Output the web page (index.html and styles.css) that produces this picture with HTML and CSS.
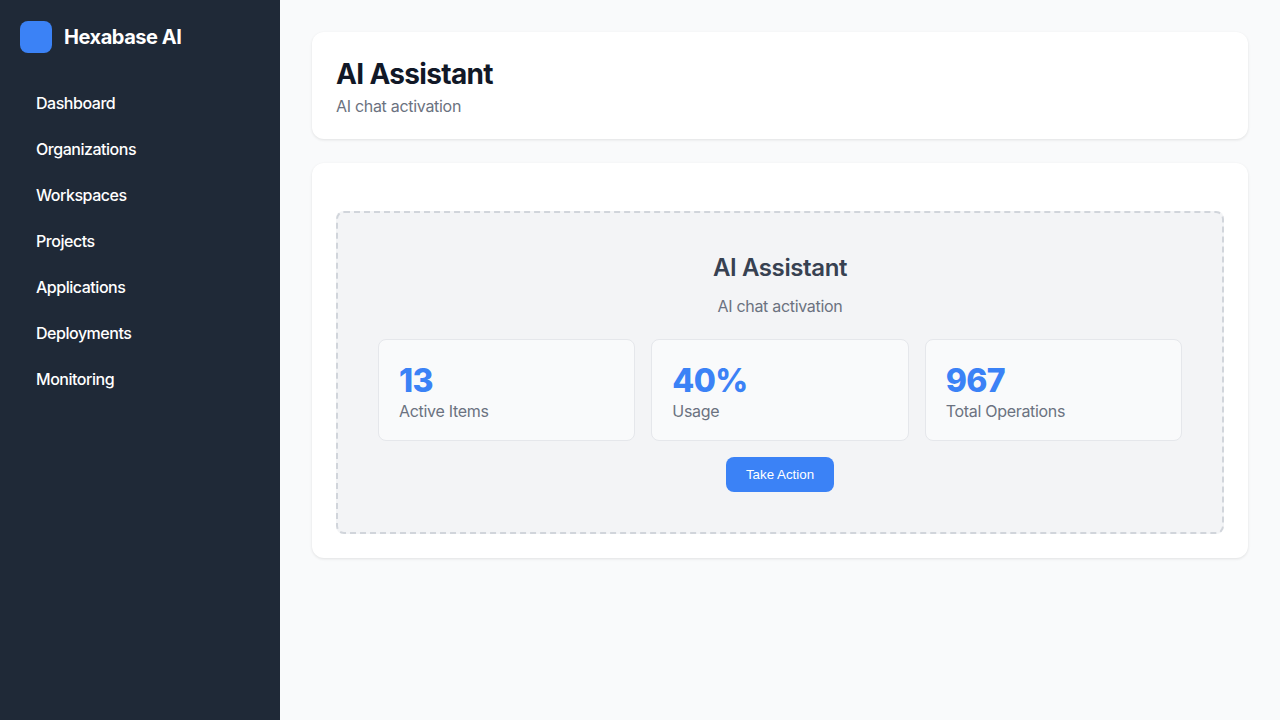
FILE: index.html
```html
<!DOCTYPE html>
<html lang="en">
<head>
<meta charset="utf-8">
<title>AI Assistant</title>
<link rel="stylesheet" href="styles.css">
</head>
<body>
<div class="layout">
  <aside class="sidebar">
    <div class="brand"><span class="logo"></span><span class="brand-name">Hexabase AI</span></div>
    <nav class="nav">
      <a class="nav-item">Dashboard</a>
      <a class="nav-item">Organizations</a>
      <a class="nav-item">Workspaces</a>
      <a class="nav-item">Projects</a>
      <a class="nav-item">Applications</a>
      <a class="nav-item">Deployments</a>
      <a class="nav-item">Monitoring</a>
    </nav>
  </aside>
  <main class="main">
    <header class="card header">
      <h1>AI Assistant</h1>
      <p>AI chat activation</p>
    </header>
    <section class="card content">
      <div class="panel">
        <h2>AI Assistant</h2>
        <p class="sub">AI chat activation</p>
        <div class="stats">
          <div class="stat"><div class="num">13</div><div class="label">Active Items</div></div>
          <div class="stat"><div class="num">40%</div><div class="label">Usage</div></div>
          <div class="stat"><div class="num">967</div><div class="label">Total Operations</div></div>
        </div>
        <button class="btn">Take Action</button>
      </div>
    </section>
  </main>
</div>
</body>
</html>
```
FILE: styles.css
```css
* { box-sizing: border-box; }
html, body { margin: 0; height: 100%; }
body { font-family: Inter, "Liberation Sans", sans-serif; background: #f9fafb; }
.layout { display: flex; min-height: 720px; }
.sidebar { width: 280px; flex: none; background: #1f2937; color: #fff; padding: 20px 0; }
.brand { display: flex; align-items: center; gap: 12px; padding: 0 20px; margin-bottom: 32px; }
.logo { width: 32px; height: 32px; border-radius: 8px; background: #3b82f6; }
.brand-name { font-size: 20px; font-weight: 700; line-height: 34px; letter-spacing: -0.45px; }
.nav { display: flex; flex-direction: column; gap: 4px; padding: 0 20px; margin-top: -4px; }
.nav-item { display: block; padding: 12px 16px; font-size: 16px; line-height: 18px; font-weight: 450; letter-spacing: -0.47px; border-radius: 8px; color: #fff; }
.main { flex: 1; padding: 32px; display: flex; flex-direction: column; gap: 24px; }
.card { background: #fff; border-radius: 12px; box-shadow: 0 1px 3px rgba(0,0,0,.1); padding: 24px; }
.header { padding: 24px 24px 23px; }
.header h1 { margin: 1px 0 0; font-size: 28px; line-height: 34px; font-weight: 700; letter-spacing: -0.67px; color: #111827; }
.header p { margin: 6px 0 0; font-size: 16px; line-height: 19px; letter-spacing: -0.3px; color: #6b7280; }
.content { padding: 48px 24px 24px; }
.panel { background: #f3f4f6; border: 2px dashed #d1d5db; border-radius: 8px; padding: 40px; text-align: center; height: 323px; }
.panel h2 { margin: 0; font-size: 24px; line-height: 29px; font-weight: 600; letter-spacing: -0.4px; color: #374151; }
.sub { margin: 15px 0 0; font-size: 16px; line-height: 19px; letter-spacing: -0.3px; color: #6b7280; }
.stats { display: grid; grid-template-columns: repeat(3, 1fr); gap: 16px; margin-top: 23px; }
.stat { background: #f9fafb; border: 1px solid #e5e7eb; border-radius: 8px; padding: 20px 20px 19px; text-align: left; }
.num { font-size: 32px; line-height: 42px; font-weight: 800; letter-spacing: -0.6px; color: #3b82f6; }
.label { font-size: 16px; line-height: 19px; letter-spacing: -0.3px; color: #6b7280; }
.btn { display: block; margin: 16px auto 0; width: 108px; height: 35px; background: #3b82f6; color: #fff; border: 0; border-radius: 8px; font: 400 13.33px "Liberation Sans", Arial, sans-serif; }
```
